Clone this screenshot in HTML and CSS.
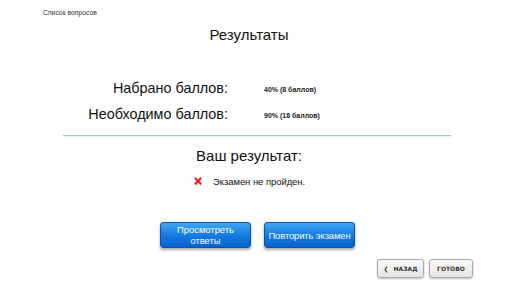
FILE: index.html
```html
<!DOCTYPE html>
<html lang="ru">
<head>
  <meta charset="UTF-8" />
  <title>Результаты</title>
  <link rel="stylesheet" href="styles.css">
</head>
<body>
  <div class="page">
    <div class="top-link">Список вопросов</div>
    <h1 class="title">Результаты</h1>

    <div class="scores">
      <div class="score-row">
        <span class="score-label">Набрано баллов:</span>
        <span class="score-value">40% (8 баллов)</span>
      </div>
      <div class="score-row">
        <span class="score-label">Необходимо баллов:</span>
        <span class="score-value">90% (18 баллов)</span>
      </div>
    </div>

    <div class="divider"></div>

    <h2 class="result-title">Ваш результат:</h2>
    <div class="result">
      <svg class="fail-icon" width="8" height="9" viewBox="0 0 8 9">
        <path d="M1.5 2.5 L6.5 7.5 M6.5 2.5 L1.5 7.5" stroke="#d0d0d0" stroke-width="1.5" transform="translate(0.6 0.8)" />
        <path d="M1.5 1.5 L6.5 6.5 M6.5 1.5 L1.5 6.5" stroke="#ea1c24" stroke-width="2" stroke-linecap="square" />
      </svg>
      <span>Экзамен не пройден.</span>
    </div>

    <div class="actions">
      <button class="blue-btn">Просмотреть ответы</button>
      <button class="blue-btn single">Повторить экзамен</button>
    </div>

    <div class="nav">
      <button class="gray-btn back"><span class="arrow">&#10094;</span> НАЗАД</button>
      <button class="gray-btn done">ГОТОВО</button>
    </div>
  </div>
</body>
</html>
```

FILE: styles.css
```css
body {
  margin: 0;
  background: #fff;
  font-family: "Liberation Sans", Arial, sans-serif;
  color: #111;
}

.page {
  width: 512px;
  height: 288px;
  display: flex;
  flex-direction: column;
  overflow: hidden;
}

.top-link {
  font-size: 6.8px;
  color: #333;
  padding: 9px 0 0 43px;
  height: 9px;
}

.title,
.result-title {
  font-size: 15px;
  font-weight: normal;
  text-align: center;
  line-height: 18px;
  padding-right: 14px;
}

.title {
  margin: 8px 0 0;
}

.scores {
  margin-top: 35px;
  display: flex;
  flex-direction: column;
  gap: 8px;
}

.score-row {
  display: flex;
  align-items: center;
  height: 18px;
}

.score-label {
  width: 228px;
  text-align: right;
  font-size: 14.4px;
}

.score-value {
  margin-left: 36px;
  font-size: 7px;
  font-weight: bold;
  color: #222;
  padding-top: 3px;
}

.divider {
  margin: 12px 0 0 63px;
  width: 388px;
  height: 1px;
  background: #b2c2da;
  border-bottom: 1px solid #eceff2;
}

.result-title {
  margin: 10px 0 0;
}

.result {
  margin: 10px 0 0 194px;
  display: flex;
  align-items: center;
  gap: 11px;
  font-size: 9.4px;
  height: 12px;
}

.fail-icon {
  display: block;
}

.actions {
  margin: 35px 0 0 160px;
  display: flex;
  gap: 13px;
}

.blue-btn {
  width: 91px;
  height: 26px;
  padding: 0;
  border: 1px solid #0d52a8;
  border-radius: 3px;
  background: linear-gradient(#3fa7f2, #1378e0 55%, #0a63cf);
  color: #fff;
  font-family: "Liberation Sans", Arial, sans-serif;
  font-size: 9.4px;
  line-height: 11px;
  box-shadow: 0 2px 3px rgba(0, 0, 0, 0.35);
  cursor: pointer;
}

.blue-btn.single {
  white-space: nowrap;
  letter-spacing: -0.1px;
}

.nav {
  margin: 11px 0 0 377px;
  display: flex;
  gap: 5px;
}

.gray-btn {
  height: 19px;
  border: 1px solid #a9a9a9;
  border-radius: 3px;
  background: linear-gradient(#fafafa, #e4e4e4);
  color: #333;
  font-family: "DejaVu Sans", sans-serif;
  font-size: 6px;
  font-weight: bold;
  box-shadow: 0 1px 2px rgba(0, 0, 0, 0.25);
  cursor: pointer;
}

.gray-btn.back {
  width: 47px;
  padding: 0 4px;
}

.gray-btn.done {
  width: 44px;
  padding: 0;
}

.arrow {
  font-size: 6px;
  margin-right: 3px;
}
```
